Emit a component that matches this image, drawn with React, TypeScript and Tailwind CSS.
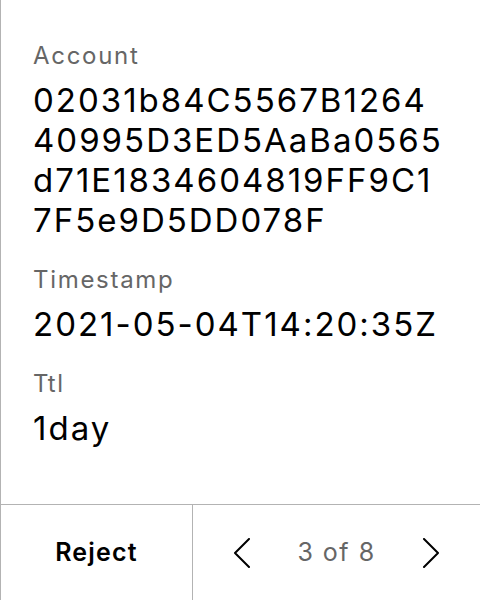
import React from "react";

const FIELDS = [
  {
    label: "Account",
    value: "02031b84C5567B126440995D3ED5AaBa0565d71E1834604819FF9C17F5e9D5DD078F"
  },
  { label: "Timestamp", value: "2021-05-04T14:20:35Z" },
  { label: "Ttl", value: "1day" }
];

function Chevron({ dir }: { dir: "left" | "right" }) {
  const pts = dir === "left" ? "16,1 2,15 16,29" : "2,1 16,15 2,29";
  return (
    <svg width="18" height="30" viewBox="0 0 18 30" fill="none">
      <polyline points={pts} stroke="#000" strokeWidth="2" strokeLinecap="round" strokeLinejoin="round" />
    </svg>
  );
}

export default function App() {
  return (
    <div
      className="flex h-[600px] w-[480px] flex-col border-l border-[#b3b3b3] bg-white text-black"
      style={{ fontFamily: "Inter, 'Noto Sans', sans-serif" }}
    >
      <div className="flex flex-1 flex-col gap-6 px-8 pt-10">
        {FIELDS.map((f) => (
          <div key={f.label} className="flex flex-col">
            <div className="text-2xl leading-8 tracking-[1.7px] text-[#666]">{f.label}</div>
            <div className="mt-2 break-all text-[33px] leading-10 tracking-[2px]">{f.value}</div>
          </div>
        ))}
      </div>
      <div className="flex h-24 border-t border-[#b3b3b3]">
        <button className="flex w-[192px] items-center justify-center border-r border-[#b3b3b3] text-[25px] font-semibold tracking-[1.2px]">
          Reject
        </button>
        <div className="flex flex-1 items-center justify-center gap-[46px]">
          <Chevron dir="left" />
          <span className="text-[25px] tracking-[1.5px] text-[#666]">3 of 8</span>
          <Chevron dir="right" />
        </div>
      </div>
    </div>
  );
}
